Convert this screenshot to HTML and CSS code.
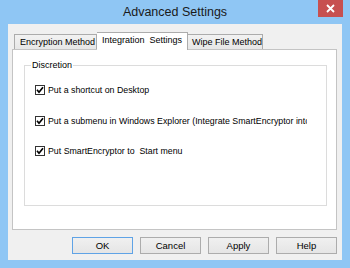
FILE: index.html
```html
<!DOCTYPE html>
<html lang="en">
<head>
    <meta charset="UTF-8">
    <title>Advanced Settings</title>
    <link rel="stylesheet" href="styles.css">
</head>
<body>

<div class="window">
    <!-- Title bar -->
    <div class="titlebar">
        <span></span>
        <h1 class="title">Advanced Settings</h1>
        <button class="close" type="button" aria-label="Close">
            <svg width="9" height="9" viewBox="0 0 9 9">
                <path d="M1 1 L8 8 M8 1 L1 8" stroke="#fff" stroke-width="1.8" fill="none"/>
            </svg>
        </button>
    </div>

    <div class="client">
        <!-- Tabs -->
        <div class="tabs">
            <div class="tab tab-first">Encryption Method</div>
            <div class="tab active">Integration&nbsp; Settings</div>
            <div class="tab tab-last">Wipe File Method</div>
        </div>

        <div class="panel">
            <fieldset class="group">
                <legend>Discretion</legend>

                <label class="check">
                    <span class="box">
                        <svg width="8" height="8" viewBox="0 0 8 8">
                            <path d="M1 3.8 L3 6.2 L7 1.2" stroke="#000" stroke-width="1.7" fill="none"/>
                        </svg>
                    </span>
                    <span class="check-text">Put a shortcut on Desktop</span>
                </label>

                <label class="check">
                    <span class="box">
                        <svg width="8" height="8" viewBox="0 0 8 8">
                            <path d="M1 3.8 L3 6.2 L7 1.2" stroke="#000" stroke-width="1.7" fill="none"/>
                        </svg>
                    </span>
                    <span class="check-text">Put a submenu in Windows Explorer (Integrate SmartEncryptor into context menu)</span>
                </label>

                <label class="check">
                    <span class="box">
                        <svg width="8" height="8" viewBox="0 0 8 8">
                            <path d="M1 3.8 L3 6.2 L7 1.2" stroke="#000" stroke-width="1.7" fill="none"/>
                        </svg>
                    </span>
                    <span class="check-text">Put SmartEncryptor to&nbsp; Start menu</span>
                </label>
            </fieldset>
        </div>

        <!-- Dialog buttons -->
        <div class="buttons">
            <button class="btn default" type="button">OK</button>
            <button class="btn" type="button">Cancel</button>
            <button class="btn" type="button">Apply</button>
            <button class="btn" type="button">Help</button>
        </div>
    </div>
</div>

</body>
</html>
```

FILE: styles.css
```css
* {
    box-sizing: border-box;
}

body {
    margin: 0;
    font-family: 'Liberation Sans', Arial, sans-serif;
    background-color: #8fc6f4;
}

.window {
    width: 350px;
    height: 268px;
    display: flex;
    flex-direction: column;
}

/* Title bar */
.titlebar {
    height: 24px;
    display: grid;
    grid-template-columns: 1fr auto 1fr;
}

.title {
    margin: 0;
    font-size: 12.5px;
    font-weight: normal;
    line-height: 24px;
    color: #1a1a1a;
}

.close {
    justify-self: end;
    width: 25px;
    height: 17px;
    margin-right: 7px;
    padding: 0;
    border: none;
    background-color: #c75050;
    display: flex;
    align-items: center;
    justify-content: center;
}

/* Client area */
.client {
    flex: 1;
    margin: 0 8px 8px 8px;
    padding: 8px 5px 6px 4px;
    background-color: #f0f0f0;
    display: flex;
    flex-direction: column;
}

.tabs {
    display: flex;
    align-items: flex-end;
    height: 18px;
    padding-left: 2px;
    margin-bottom: -1px;
}

.tab {
    height: 16px;
    padding: 0 4px;
    border: 1px solid #acacac;
    border-bottom: none;
    background: linear-gradient(#f2f2f2, #e6e6e6);
    font-size: 9px;
    line-height: 15px;
    color: #000;
    white-space: nowrap;
}

.tab-first {
    width: 83px;
    padding-left: 5px;
}

.tab-last {
    width: 75px;
    border-left: none;
}

.tab.active {
    position: relative;
    z-index: 1;
    width: 91px;
    height: 18px;
    padding-left: 5px;
    border-left: none;
    background: #fff;
    line-height: 15px;
}

.panel {
    height: 181px;
    padding: 10px 9px 0 11px;
    background-color: #fff;
    border: 1px solid #c4c4c4;
}

/* Group box */
.group {
    height: 146px;
    margin: 0;
    padding: 0 0 0 6px;
    border: 1px solid #dcdcdc;
}

.group legend {
    padding: 0 1px;
    font-size: 9px;
    line-height: 11px;
    color: #000;
}

.check {
    display: flex;
    align-items: center;
    width: 272px;
    height: 30.5px;
    margin-left: 4px;
    overflow: hidden;
    white-space: nowrap;
    font-size: 8.8px;
    color: #000;
}

.check:first-of-type {
    margin-top: 4px;
}

.box {
    flex: none;
    width: 10px;
    height: 10px;
    margin-right: 3px;
    border: 1px solid #333;
    background-color: #fff;
    display: flex;
    align-items: center;
    justify-content: center;
}

/* Buttons */
.buttons {
    display: flex;
    justify-content: flex-end;
    gap: 7px;
    margin-top: 7px;
}

.btn {
    width: 61px;
    height: 17px;
    padding: 0;
    border: 1px solid #acacac;
    background: linear-gradient(#f0f0f0, #e5e5e5);
    font-family: 'Liberation Sans', Arial, sans-serif;
    font-size: 9.5px;
    color: #000;
}

.btn.default {
    border-color: #5fa3e6;
}
```
